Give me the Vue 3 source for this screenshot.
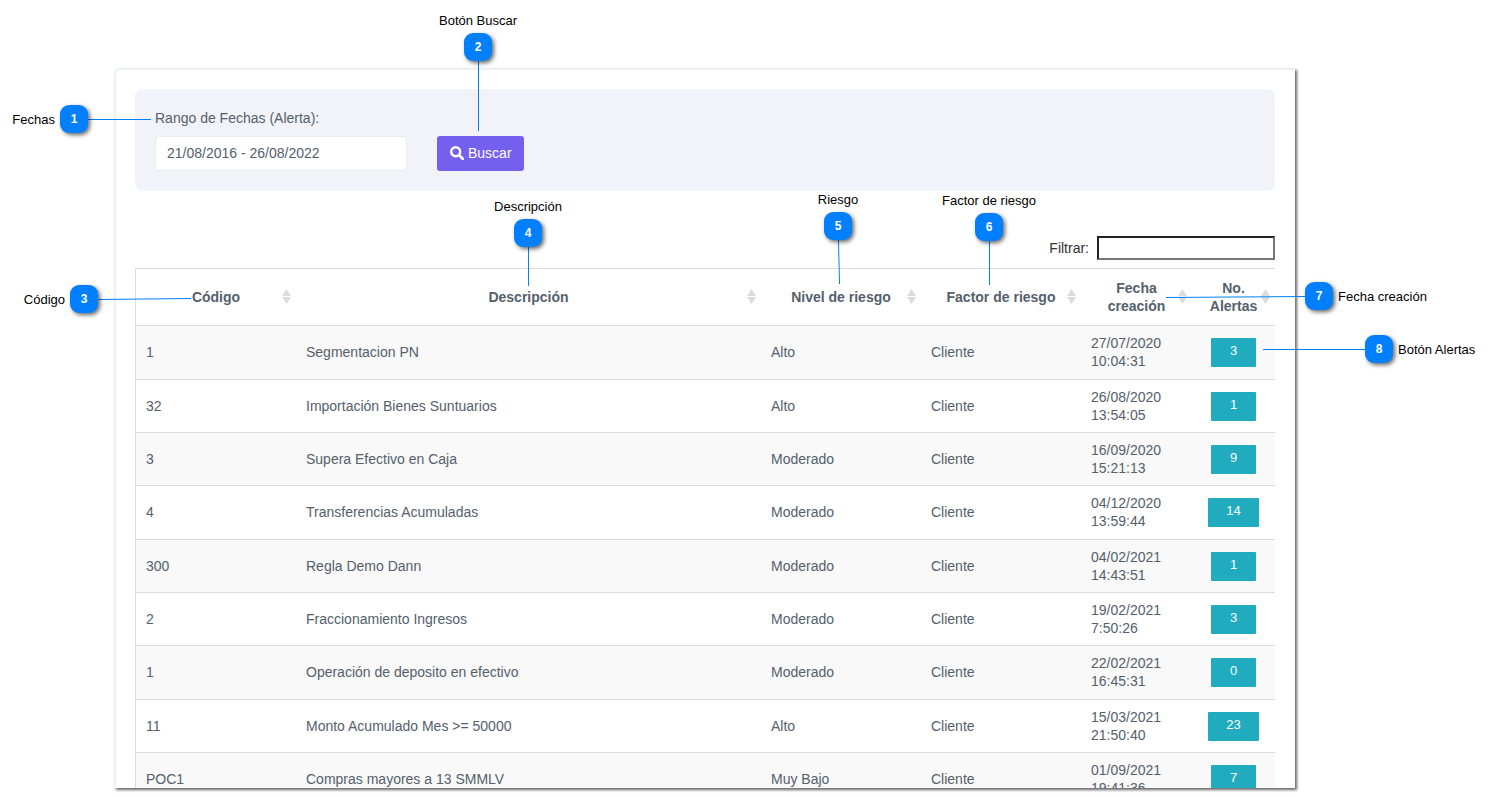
<script setup>
import { ref } from 'vue'

const range = ref('21/08/2016 - 26/08/2022')
const filter = ref('')

const columns = [
  { label: 'Código', cls: 'c-code' },
  { label: 'Descripción', cls: 'c-desc' },
  { label: 'Nivel de riesgo', cls: 'c-mid' },
  { label: 'Factor de riesgo', cls: 'c-mid' },
  { label: 'Fecha creación', cls: 'c-date' },
  { label: 'No. Alertas', cls: 'c-alerts' },
]

const rows = [
  { code: '1', desc: 'Segmentacion PN', level: 'Alto', factor: 'Cliente', day: '27/07/2020', time: '10:04:31', alerts: 3 },
  { code: '32', desc: 'Importación Bienes Suntuarios', level: 'Alto', factor: 'Cliente', day: '26/08/2020', time: '13:54:05', alerts: 1 },
  { code: '3', desc: 'Supera Efectivo en Caja', level: 'Moderado', factor: 'Cliente', day: '16/09/2020', time: '15:21:13', alerts: 9 },
  { code: '4', desc: 'Transferencias Acumuladas', level: 'Moderado', factor: 'Cliente', day: '04/12/2020', time: '13:59:44', alerts: 14 },
  { code: '300', desc: 'Regla Demo Dann', level: 'Moderado', factor: 'Cliente', day: '04/02/2021', time: '14:43:51', alerts: 1 },
  { code: '2', desc: 'Fraccionamiento Ingresos', level: 'Moderado', factor: 'Cliente', day: '19/02/2021', time: '7:50:26', alerts: 3 },
  { code: '1', desc: 'Operación de deposito en efectivo', level: 'Moderado', factor: 'Cliente', day: '22/02/2021', time: '16:45:31', alerts: 0 },
  { code: '11', desc: 'Monto Acumulado Mes >= 50000', level: 'Alto', factor: 'Cliente', day: '15/03/2021', time: '21:50:40', alerts: 23 },
  { code: 'POC1', desc: 'Compras mayores a 13 SMMLV', level: 'Muy Bajo', factor: 'Cliente', day: '01/09/2021', time: '19:41:36', alerts: 7 },
]

// x, y: top-left corner of the badge; side: where the caption sits
const callouts = [
  { n: 1, text: 'Fechas', x: 60, y: 105, side: 'left', line: [88, 119.5, 151, 119.5] },
  { n: 2, text: 'Botón Buscar', x: 464, y: 33, side: 'top', line: [478.5, 61, 478.5, 131] },
  { n: 3, text: 'Código', x: 70, y: 285, side: 'left', line: [98, 299.5, 191, 298.5] },
  { n: 4, text: 'Descripción', x: 514, y: 219, side: 'top', line: [528.5, 247, 528.5, 286] },
  { n: 5, text: 'Riesgo', x: 824, y: 212, side: 'top', line: [838.5, 240, 839.5, 284] },
  { n: 6, text: 'Factor de riesgo', x: 975, y: 213, side: 'top', line: [989.5, 241, 989.5, 285] },
  { n: 7, text: 'Fecha creación', x: 1305, y: 282, side: 'right', line: [1166, 297.5, 1305, 296.5] },
  { n: 8, text: 'Botón Alertas', x: 1365, y: 335, side: 'right', line: [1263, 349.5, 1365, 349.5] },
]
</script>

<template>
  <div class="page">
    <main class="card">
      <form class="search" @submit.prevent>
        <div class="field">
          <label for="range">Rango de Fechas (Alerta):</label>
          <input id="range" v-model="range" type="text" />
        </div>
        <button class="buscar" type="submit">
          <svg viewBox="0 0 14 14" aria-hidden="true" fill="none" stroke="currentColor">
            <circle cx="5.700" cy="5.700" r="4.500" stroke-width="2.400" />
            <path d="M9.300 9.300 12.700 12.700" stroke-width="2.800" stroke-linecap="round" />
          </svg>
          <span>Buscar</span>
        </button>
      </form>

      <div class="filter">
        <label for="filter">Filtrar:</label>
        <input id="filter" v-model="filter" type="search" />
      </div>

      <table>
        <thead>
          <tr>
            <th v-for="c in columns" :key="c.label" :class="c.cls" scope="col">
              {{ c.label }}
              <svg class="sort" viewBox="0 0 9 15" aria-hidden="true">
                <path d="M4.500 0 9 7H0zM0 8h9l-4.500 7z" fill="#dcdcdc" />
              </svg>
            </th>
          </tr>
        </thead>
        <tbody>
          <tr v-for="r in rows" :key="r.day">
            <td>{{ r.code }}</td>
            <td>{{ r.desc }}</td>
            <td>{{ r.level }}</td>
            <td>{{ r.factor }}</td>
            <td>{{ r.day }}<br />{{ r.time }}</td>
            <td class="action"><button class="alerts" type="button">{{ r.alerts }}</button></td>
          </tr>
        </tbody>
      </table>
    </main>

    <svg class="lines" aria-hidden="true">
      <line v-for="c in callouts" :key="c.n" :x1="c.line[0]" :y1="c.line[1]" :x2="c.line[2]" :y2="c.line[3]" />
    </svg>
    <div
      v-for="c in callouts"
      :key="c.n"
      class="callout"
      :class="c.side"
      :style="{ left: c.x + 'px', top: c.y + 'px' }"
    >
      <span class="badge">{{ c.n }}</span>
      <span class="caption">{{ c.text }}</span>
    </div>
  </div>
</template>

<style>
body {
  margin: 0;
  background: #fff;
}
</style>

<style scoped>
.page {
  position: relative;
  box-sizing: border-box;
  height: 100vh;
  padding: 68px 197px 9px 114px;
  overflow: hidden;
  font-family: "Liberation Sans", Arial, sans-serif;
  font-size: 14px;
  line-height: 18px;
  color: #54606c;
}
.card {
  box-sizing: border-box;
  height: 100%;
  padding: 19px 20px 0 19px;
  overflow: hidden;
  background: #fff;
  border: 2px solid #ecf0f4;
  border-right: 0;
  border-bottom: 0;
  border-radius: 6px 0 0 0;
  box-shadow: 2px 2px 3px 0 rgba(0, 0, 0, 0.6);
}
input,
button {
  box-sizing: border-box;
  font: inherit;
}
.search {
  display: flex;
  align-items: flex-end;
  gap: 30px;
  padding: 20px;
  background: #f2f3f8;
  border-radius: 8px;
}
.field {
  display: flex;
  flex-direction: column;
  gap: 9px;
  width: 252px;
}
.field input {
  height: 35px;
  padding: 0 11px 2px;
  color: #54606c;
  background: #fff;
  border: 1px solid #e8eaf0;
  border-radius: 4px;
}
.buscar {
  display: flex;
  align-items: center;
  gap: 4px;
  height: 35px;
  padding: 0 12px 2px 13px;
  color: #fff;
  background: #7460ee;
  border: 0;
  border-radius: 3px;
}
.buscar svg {
  width: 14px;
  height: 14px;
}
.filter {
  display: flex;
  justify-content: flex-end;
  align-items: center;
  gap: 8px;
  margin: 45px 0 8px;
  color: #333;
}
.filter input {
  width: 178px;
  height: 24px;
  padding: 0 4px;
  background: #fff;
  border: 2px solid;
  border-color: #222 #767676 #767676 #222;
  border-radius: 0;
  appearance: none;
}
table {
  width: 100%;
  table-layout: fixed;
  border-spacing: 0;
  border-left: 1px solid #dcdcdc;
}
th,
td {
  box-sizing: border-box;
  padding: 0 10px;
  border-top: 1px solid #dcdcdc;
  text-align: left;
  vertical-align: middle;
}
th {
  position: relative;
  height: 57px;
  text-align: center;
  color: #54606c;
}
.c-code,
.c-mid {
  width: 160px;
}
.c-date {
  width: 111px;
  padding: 0 24px;
}
.c-alerts {
  width: 83px;
}
.sort {
  position: absolute;
  top: 20px;
  right: 5px;
  width: 9px;
  height: 15px;
}
td {
  height: 53px;
}
tbody tr:nth-child(3n + 1) td {
  height: 54px;
  padding-bottom: 1px;
}
tbody tr:nth-child(odd) {
  background: #f9f9f9;
}
td.action {
  padding: 0;
  text-align: center;
}
.alerts {
  min-width: 45px;
  height: 29px;
  padding: 0 18px 3px;
  font-size: 13px;
  color: #fff;
  background: #20abbf;
  border: 0;
  border-radius: 1px;
  vertical-align: middle;
}
.lines {
  position: absolute;
  inset: 0;
  width: 100%;
  height: 100%;
  pointer-events: none;
}
.lines line {
  stroke: #0080ff;
  stroke-width: 1;
}
.callout {
  position: absolute;
  width: 28px;
  height: 28px;
  pointer-events: none;
}
.badge {
  display: block;
  border-radius: 9px;
  background: #0080ff;
  box-shadow: 2px 2px 4px rgba(0, 0, 0, 0.6);
  font-size: 12px;
  font-weight: bold;
  line-height: 28px;
  text-align: center;
  color: #fff;
}
.caption {
  position: absolute;
  font-size: 13px;
  line-height: 16px;
  color: #000;
  white-space: nowrap;
}
.left .caption {
  right: 33px;
  top: 7px;
}
.right .caption {
  left: 33px;
  top: 7px;
}
.top .caption {
  left: 50%;
  bottom: 32px;
  transform: translateX(-50%);
}
</style>
